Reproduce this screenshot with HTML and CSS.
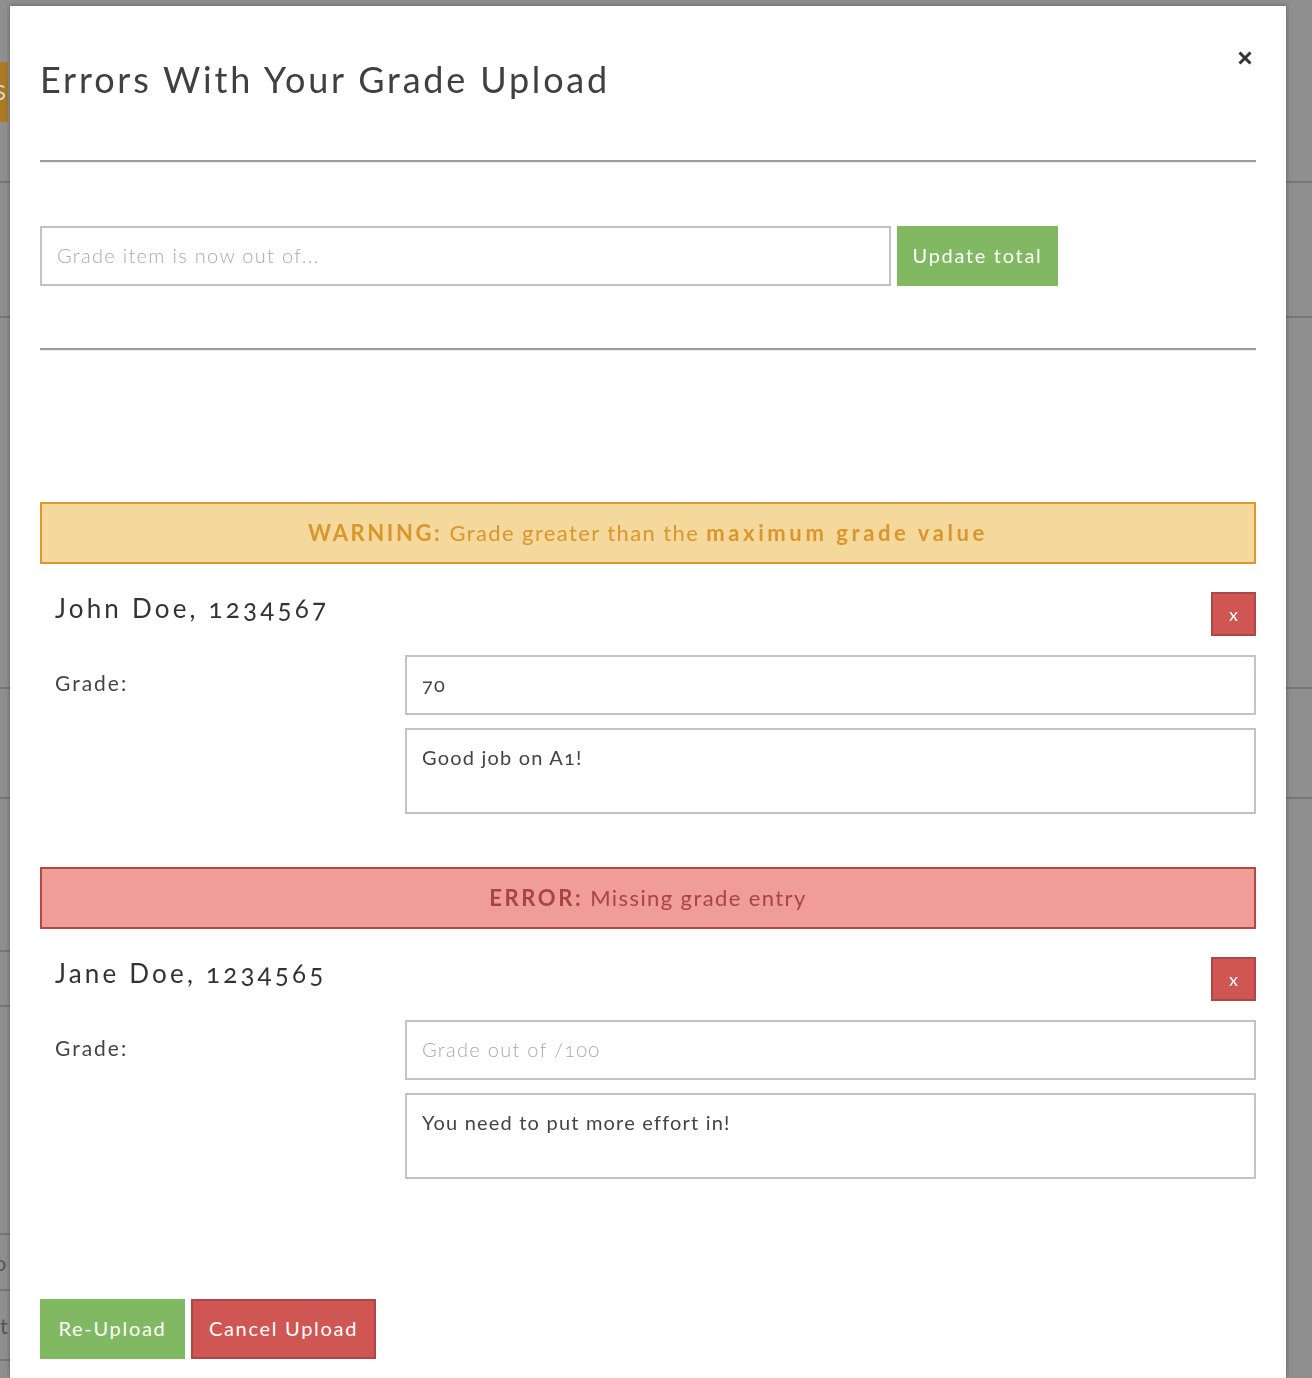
FILE: index.html
```html
<!DOCTYPE html>
<html lang="en">
<head>
<meta charset="utf-8">
<title>Errors With Your Grade Upload</title>
<link rel="stylesheet" href="styles.css">
</head>
<body>
<div class="page-behind" aria-hidden="true">
  <div class="bg-row bg-row-1"><span class="bg-tag">S</span></div>
  <div class="bg-row bg-row-2"></div>
  <div class="bg-row bg-row-3"></div>
  <div class="bg-row bg-row-4"></div>
  <div class="bg-side">
    <div class="bg-srow bg-srow-1"></div>
    <div class="bg-srow bg-srow-2"></div>
    <div class="bg-srow bg-srow-3"></div>
    <div class="bg-srow bg-srow-4"><span class="bg-letter">o</span></div>
    <div class="bg-srow bg-srow-5"><span class="bg-letter">t</span></div>
  </div>
</div>

<div class="modal">
  <div class="modal-header">
    <h1 class="modal-title">Errors With Your Grade Upload</h1>
    <button class="close" type="button" aria-label="Close">
      <svg width="14" height="14" viewBox="0 0 14 14"><path d="M1.5 1.5 L12.5 12.5 M12.5 1.5 L1.5 12.5" stroke="#333" stroke-width="3" stroke-linecap="butt"/></svg>
    </button>
  </div>
  <hr class="divider divider-top">

  <div class="total-row">
    <input class="field total-input" type="text" placeholder="Grade item is now out of...">
    <button class="btn btn-green" type="button">Update total</button>
  </div>

  <hr class="divider divider-mid">

  <div class="alert alert-warning"><b class="tag">WARNING:</b> Grade greater than the <b class="emph">maximum grade value</b></div>

  <div class="student">
    <div class="student-head">
      <h2 class="student-name">John Doe, 1234567</h2>
      <button class="btn-remove" type="button">x</button>
    </div>
    <div class="student-grid">
      <label class="grade-label">Grade:</label>
      <div class="grade-fields">
        <input class="field" type="text" value="70">
        <textarea class="field comment">Good job on A1!</textarea>
      </div>
    </div>
  </div>

  <div class="alert alert-error"><b class="tag">ERROR:</b> Missing grade entry</div>

  <div class="student">
    <div class="student-head">
      <h2 class="student-name">Jane Doe, 1234565</h2>
      <button class="btn-remove" type="button">x</button>
    </div>
    <div class="student-grid">
      <label class="grade-label">Grade:</label>
      <div class="grade-fields">
        <input class="field" type="text" placeholder="Grade out of /100">
        <textarea class="field comment">You need to put more effort in!</textarea>
      </div>
    </div>
  </div>

  <div class="actions">
    <button class="btn btn-green" type="button">Re-Upload</button>
    <button class="btn btn-red" type="button">Cancel Upload</button>
  </div>
</div>
</body>
</html>
```

FILE: styles.css
```css
* { box-sizing: border-box; }

html, body {
  margin: 0;
  padding: 0;
}

body {
  background: #8f8f8f;
  font-family: "Lato", "Open Sans", sans-serif;
  color: #444;
  height: 1378px;
  overflow: hidden;
  padding-top: 6px;
}

/* dimmed page behind the modal */
.page-behind {
  position: fixed;
  inset: 0;
  z-index: 0;
}
.bg-row {
  border-bottom: 2px solid #777;
}
.bg-row-1 { height: 183px; position: relative; }
.bg-row-2 { height: 135px; }
.bg-row-3 { height: 371px; }
.bg-row-4 { height: 110px; }
.bg-tag {
  position: absolute;
  left: 0;
  top: 62px;
  width: 8px;
  height: 60px;
  background: #a87a22;
  color: #ddd;
  font-size: 22px;
  line-height: 60px;
  overflow: hidden;
  text-indent: -6px;
}
.bg-side { width: 10px; }
.bg-srow { border-bottom: 2px solid #777; }
.bg-srow-1 { height: 153px; }
.bg-srow-2 { height: 55px; }
.bg-srow-3 { height: 228px; }
.bg-srow-4 { height: 56px; color: #555; font-size: 22px; line-height: 56px; overflow: hidden; text-indent: -6px; }
.bg-srow-5 { height: 70px; color: #555; font-size: 22px; line-height: 70px; overflow: hidden; }

/* modal */
.modal {
  position: relative;
  z-index: 1;
  margin-left: 10px;
  width: 1276px;
  min-height: 1372px;
  background: #fff;
  padding: 0 30px;
  box-shadow: 0 0 5px rgba(0, 0, 0, 0.35);
}

.modal-header {
  display: flex;
  justify-content: space-between;
  align-items: flex-start;
  padding-top: 51px;
}
.modal-title {
  margin: 0;
  font-size: 36px;
  line-height: 44px;
  font-weight: 400;
  letter-spacing: 2.8px;
  color: #404040;
}
.close {
  border: 0;
  background: none;
  padding: 0;
  margin: -6px 4px 0 0;
  width: 14px;
  height: 14px;
  cursor: pointer;
  display: block;
}
.close svg { display: block; }

.divider {
  margin: 0;
  height: 0;
  border: 0;
  border-top: 2px solid #9c9c9c;
  border-bottom: 1px solid #eeeeee;
}
.divider-top { margin-top: 59px; }
.divider-mid { margin-top: 62px; }

.total-row {
  display: flex;
  gap: 6px;
  margin-top: 63px;
}

.field {
  display: block;
  width: 100%;
  height: 60px;
  border: 2px solid #c6c2c2;
  background: #fff;
  font-family: inherit;
  font-size: 20px;
  color: #444;
  padding: 0 15px 2px;
  margin: 0;
  outline: none;
  border-radius: 0;
  letter-spacing: 1.2px;
  font-variant-numeric: oldstyle-nums;
}
.field::placeholder {
  color: #a9a9a9;
  font-weight: 300;
  letter-spacing: 1.3px;
}
.total-input { width: 851px; }

.btn {
  height: 60px;
  border: 2px solid transparent;
  font-family: inherit;
  font-size: 20px;
  font-weight: 400;
  letter-spacing: 1.7px;
  color: #fff;
  padding: 0 0 2px;
  border-radius: 0;
  cursor: pointer;
}
.btn-green {
  background: #80b962;
  border-color: #80b962;
}
.total-row .btn-green { width: 161px; }
.btn-red {
  background: #d05654;
  border-color: #ad4644;
}

.alert {
  height: 62px;
  border: 2px solid;
  display: flex;
  align-items: center;
  justify-content: center;
  font-size: 22px;
  letter-spacing: 1.4px;
  white-space: pre;
  padding-bottom: 2px;
}
.alert .tag {
  font-weight: 700;
  letter-spacing: 2.6px;
}
.alert .emph {
  font-weight: 700;
  letter-spacing: 3.6px;
}
.alert-warning {
  margin-top: 151px;
  background: #f5d99c;
  border-color: #dc982c;
  color: #d9962c;
}
.alert-error {
  margin-top: 53px;
  background: #f09c99;
  border-color: #b7473f;
  color: #aa4441;
}

.student {
  padding-left: 15px;
}
.student-head {
  display: flex;
  justify-content: space-between;
  align-items: flex-start;
  margin-top: 28px;
}
.student-name {
  margin: 0;
  font-size: 26px;
  line-height: 32px;
  font-weight: 400;
  letter-spacing: 3.2px;
  color: #333;
  font-variant-numeric: oldstyle-nums;
}
.btn-remove {
  width: 45px;
  height: 44px;
  background: #d05654;
  border: 2px solid #ad4644;
  color: #fff;
  font-family: inherit;
  font-size: 18px;
  line-height: 38px;
  padding: 0;
  border-radius: 0;
  cursor: pointer;
}

.student-grid {
  display: grid;
  grid-template-columns: 350px 1fr;
  margin-top: 19px;
}
.grade-label {
  font-size: 21px;
  line-height: 56px;
  color: #444;
  letter-spacing: 2px;
}
.grade-fields {
  display: flex;
  flex-direction: column;
  gap: 13px;
}
.comment {
  height: 86px;
  padding-top: 13px;
  line-height: 28px;
  resize: none;
}

.actions {
  display: flex;
  gap: 6px;
  margin-top: 120px;
}
.actions .btn-green { width: 145px; }
.actions .btn-red { width: 185px; }
```
